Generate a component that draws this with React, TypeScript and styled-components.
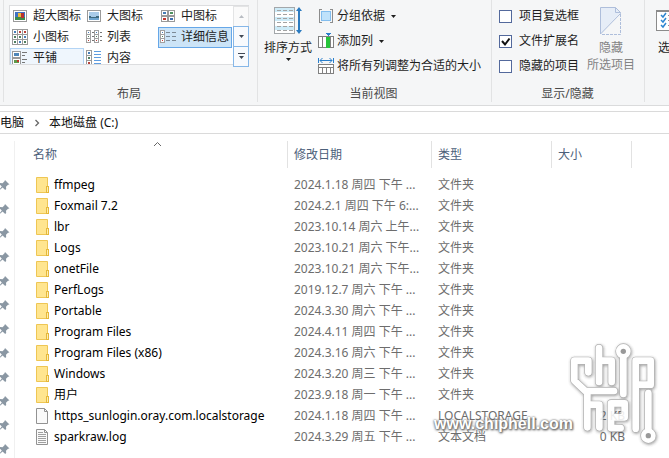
import React from "react";
import styled, { createGlobalStyle, css } from "styled-components";

const GlobalStyle = createGlobalStyle`
  * { box-sizing: border-box; }
  body {
    margin: 0;
    background: #fff;
    color: #1e1e1e;
    font-family: "Noto Sans", "Noto Sans CJK SC", sans-serif;
    font-size: 12px;
    line-height: 16px;
  }
  button {
    font: inherit;
    color: inherit;
    margin: 0;
    padding: 0;
    border: 0;
    background: none;
    white-space: nowrap;
  }
  svg { display: block; flex: none; }
`;

const Window = styled.div`
  position: relative;
  display: flex;
  flex-direction: column;
  height: 100vh;
  overflow: hidden;
`;

const Ribbon = styled.header`
  display: flex;
  flex: none;
  padding: 0 0 3px 3px;
  background: #f5f6f7;
  border-bottom: 1px solid #dadbdc;
  overflow: hidden;
`;

const Group = styled.section<{ $width: number; $pad?: number }>`
  display: flex;
  flex-direction: column;
  flex: none;
  width: ${(p) => p.$width}px;
  padding-left: ${(p) => p.$pad ?? 0}px;
  border-left: 1px solid #e2e3e4;
`;

const GroupBody = styled.div<{ $gap?: number }>`
  display: flex;
  align-items: flex-start;
  gap: ${(p) => p.$gap ?? 0}px;
  height: 86px;
  padding-top: 5px;
`;

const GroupTitle = styled.h2<{ $shift?: number }>`
  margin: 0;
  font-size: 12px;
  font-weight: 400;
  text-align: center;
  color: #4a4a4a;
  padding-right: ${(p) => p.$shift ?? 0}px;
`;

const Gallery = styled.div`
  display: flex;
  height: 60px;
  border: 1px solid #dcdddf;
  background: #fff;
`;

const GalleryGrid = styled.div`
  display: grid;
  grid-template-columns: repeat(3, 74px);
  grid-auto-rows: 21px;
  overflow: hidden;
`;

const GalleryItem = styled.button<{ $state?: "active" | "hover" }>`
  display: flex;
  align-items: center;
  gap: 5px;
  padding: 0 0 2px 1px;
  border: 1px solid transparent;
  ${(p) =>
    p.$state === "active" &&
    css`
      border-color: #66a7e8;
      background: #cce4f7;
    `}
  ${(p) =>
    p.$state === "hover" &&
    css`
      border-color: #b3d4f5;
      background: #eff6fd;
    `}
`;

const GalleryScroll = styled.div`
  display: grid;
  grid-template-rows: 20px 20px 20px;
  width: 16px;
  margin: 0 -1px -1px 1px;
`;

const ScrollButton = styled.button<{ $disabled?: boolean }>`
  display: grid;
  place-items: center;
  margin-bottom: -1px;
  border: 1px solid ${(p) => (p.$disabled ? "#e3e4e5" : "#86b7e8")};
  color: ${(p) => (p.$disabled ? "#b8bcc2" : "#404854")};
  background: ${(p) => (p.$disabled ? "#fafafa" : "#f8fafd")};
`;

const BigButton = styled.button`
  display: flex;
  flex-direction: column;
  align-items: center;
  padding-top: 2px;
`;

const BigLabel = styled.span<{ $muted?: boolean }>`
  display: block;
  margin-top: 4px;
  text-align: center;
  line-height: 17px;
  color: ${(p) => (p.$muted ? "#838383" : "inherit")};
`;

const Stack = styled.div`
  display: flex;
  flex-direction: column;
  gap: 5px;
  padding-top: 1px;
`;

const SmallButton = styled.button`
  display: flex;
  align-items: center;
  height: 20px;
  gap: 3px;
`;

const Arrow = styled.span`
  margin-left: 2px;
`;

const CheckLabel = styled.label`
  display: flex;
  align-items: center;
  height: 20px;
  gap: 7px;
  white-space: nowrap;
`;

const CheckBox = styled.span`
  position: relative;
  display: grid;
`;

const CheckInput = styled.input`
  appearance: none;
  width: 13px;
  height: 13px;
  margin: 0;
  border: 1px solid #53699c;
  background: #fff;
  & + svg {
    position: absolute;
    inset: 0;
    visibility: hidden;
    pointer-events: none;
  }
  &:checked + svg {
    visibility: visible;
  }
`;

const AddressBar = styled.nav`
  display: flex;
  flex: none;
  align-items: center;
  height: 23px;
  margin-top: 5px;
  border: solid #dadada;
  border-width: 1px 0;
  color: #111;
`;

const Crumb = styled.a`
  color: inherit;
  text-decoration: none;
`;

const CrumbArrow = styled.span`
  display: grid;
  place-items: center;
  width: 25px;
`;

const Body = styled.div`
  display: flex;
  flex: 1;
  min-height: 0;
`;

const PinRail = styled.aside`
  display: flex;
  flex-direction: column;
  flex: none;
  width: 15px;
  gap: 12px;
  padding-top: 38px;
  margin-top: 7px;
  border-right: 1px solid #f0f0f0;
  overflow: hidden;
`;

const FilePane = styled.main`
  flex: 1;
  min-width: 0;
  padding-top: 7px;
`;

const FileTable = styled.table`
  width: 100%;
  table-layout: fixed;
  border-collapse: separate;
  border-spacing: 0;
  white-space: nowrap;
  thead::after {
    content: "";
    display: block;
    height: 6px;
  }
`;

const Col = styled.col<{ $width?: number }>`
  width: ${(p) => (p.$width ? `${p.$width}px` : "auto")};
`;

const HeadCell = styled.th<{ $first?: boolean; $last?: boolean }>`
  position: relative;
  height: 27px;
  padding: 1px 0 0 ${(p) => (p.$first ? 18 : 6)}px;
  border-right: ${(p) => (p.$last ? "0" : "1px solid #e2e2e2")};
  font-weight: 400;
  text-align: left;
  color: #4c607a;
`;

const SortMark = styled.span`
  position: absolute;
  top: 0;
  left: 138px;
`;

const Cell = styled.td<{ $right?: boolean }>`
  height: 21px;
  padding: 0 7px 0 6px;
  color: #6d6d6d;
  text-align: ${(p) => (p.$right ? "right" : "left")};
`;

const NameCell = styled(Cell)`
  padding-left: 21px;
  color: #000;
`;

const FileName = styled.span`
  display: flex;
  align-items: center;
  gap: 5px;
`;

const Watermark = styled.div`
  position: absolute;
  right: 0;
  bottom: 5px;
  display: flex;
  align-items: flex-end;
  pointer-events: none;
`;

const WatermarkText = styled.span`
  margin: 0 -13px 19px 0;
  font: bold 16px/20px "Liberation Sans", Arial, sans-serif;
  color: #fff;
  text-shadow: 0 0 2px #666, 1px 1px 2px #666, 0 1px 3px #888;
`;

const Frame = ({ x, y, w, h }: { x: number; y: number; w: number; h: number }) => (
  <rect x={x + 0.5} y={y + 0.5} width={w - 1} height={h - 1} fill="#fff" stroke="#9a9a9a" />
);

const icons: Record<string, React.ReactNode> = {
  xl: (
    <>
      <Frame x={1} y={2} w={14} h={12} />
      <rect x="3" y="4" width="10" height="8" fill="#3f72c4" />
      <rect x="3" y="9" width="10" height="3" fill="#3d8a4a" />
      <rect x="6" y="5" width="3" height="4" fill="#e8b93a" />
      <rect x="9" y="5" width="3" height="5" fill="#b8322f" />
    </>
  ),
  large: (
    <>
      <Frame x={1} y={2} w={14} h={12} />
      <rect x="3" y="4" width="10" height="8" fill="#a9cbe8" />
      <path d="M3 8l4 1 6-1v4H3z" fill="#3e6a80" />
      <rect x="3" y="10" width="10" height="2" fill="#6fa5cf" />
    </>
  ),
  medium: (
    <>
      <Frame x={1} y={2} w={7} h={6} />
      <Frame x={8} y={2} w={7} h={6} />
      <Frame x={1} y={8} w={7} h={6} />
      <Frame x={8} y={8} w={7} h={6} />
      <path d="M3 4h3v2H3z" fill="#477eb8" />
      <path d="M10 4h3v2h-3z" fill="#4f9360" />
      <path d="M3 10h3v2H3z" fill="#c4372f" />
      <path d="M10 10h3v2h-3z" fill="#3d6eb1" />
    </>
  ),
  small: (
    <>
      {[0, 5, 10].map((y) =>
        [0, 5, 10].map((x) => (
          <g key={`${x}-${y}`}>
            <rect x={x + 0.5} y={y + 0.5} width="5" height="5" fill="#fff" stroke="#9a9a9a" />
            <rect
              x={x + 2}
              y={y + 2}
              width="2"
              height="2"
              fill={(x + y) % 3 === 0 ? "#477eb8" : x > y ? "#b9423b" : "#4f7f60"}
            />
          </g>
        ))
      )}
    </>
  ),
  list: (
    <>
      {[0, 8].map((x) =>
        [2, 6, 10].map((y, i) => (
          <g key={`${x}-${y}`}>
            <rect x={x + 0.5} y={y - 0.5} width="4" height="4" fill="#fff" stroke="#a0a0a0" />
            <rect x={x + 2} y={y + 1} width="1" height="1" fill={["#477eb8", "#4f7f60", "#b9423b"][i]} />
            <path d={`M${x + 6} ${y + 1.5}h2`} stroke="#777" />
          </g>
        ))
      )}
    </>
  ),
  details: (
    <>
      {[2, 6, 10].map((y, i) => (
        <g key={y}>
          <rect x="0.5" y={y - 0.5} width="4" height="4" fill="#fff" stroke="#a0a0a0" />
          <rect x="2" y={y + 1} width="1" height="1" fill={["#477eb8", "#4f7f60", "#d03a33"][i]} />
          <path d={`M6 ${y + 1.5}h4m2 0h4`} stroke="#7d8a96" />
        </g>
      ))}
    </>
  ),
  tiles: (
    <>
      <Frame x={0} y={1} w={9} h={7} />
      <Frame x={0} y={8} w={9} h={7} />
      <path d="M2 3h5v3H2z" fill="#4e86b9" />
      <path d="M2 10h5v3H2z" fill="#5d9a4c" />
      <path d="M5 10h2v2H5z" fill="#c4372f" />
      <path d="M10 2.5h5M10 5.5h3M10 9.5h5M10 12.5h3" stroke="#777" />
    </>
  ),
  content: (
    <>
      {[1, 6, 11].map((y, i) => (
        <g key={y}>
          <rect x="0.5" y={y - 0.5} width="5" height="5" fill="#fff" stroke="#9a9a9a" />
          <rect x="2" y={y + 1} width="2" height="2" fill={["#477eb8", "#4f7f60", "#b9423b"][i]} />
        </g>
      ))}
      <path d="M8 1.5h7M8 4.5h7M8 7.5h7M8 10.5h7M8 13.5h7" stroke="#5f9de0" />
    </>
  ),
  group: (
    <>
      <path d="M4 1.5H1.5v13H4M12 1.5h2.5v13H12" fill="none" stroke="#8c8c8c" />
      <rect x="3.5" y="3.5" width="9" height="9" fill="#bfe2fb" stroke="#82bdee" />
    </>
  ),
  addColumn: (
    <>
      <rect x="0.5" y="3.5" width="15" height="11" fill="#fff" stroke="#808080" />
      <path d="M4.5 3v12M12.5 3v12" stroke="#808080" />
      <rect x="8" y="4" width="4" height="11" fill="#26c43a" />
      <path d="M7 0h6l-3 3z" fill="#2a7fcc" />
    </>
  ),
  fitColumns: (
    <>
      <path d="M.5 0v5M15.5 0v5M2 2.5h12M4.500 0L2 2.5 4.500 5M11.500 0L14 2.5 11.500 5" fill="none" stroke="#2a7fcc" />
      <rect x="0.5" y="6.5" width="15" height="9" fill="#fff" stroke="#808080" />
      <path d="M0 9.5h16M4.5 10v6M8.5 10v6M12.5 10v6" stroke="#808080" />
    </>
  ),
};

const Icon = ({ name }: { name: string }) => (
  <svg width="16" height="16" viewBox="0 0 16 16" shapeRendering={name === "fitColumns" ? "auto" : "crispEdges"} aria-hidden="true">
    {icons[name]}
  </svg>
);

const Caret = ({ kind = "down" }: { kind?: "up" | "down" | "more" }) => (
  <svg width="7" height="7" viewBox="0 0 7 7" fill="currentColor" aria-hidden="true">
    {kind === "up" && <path d="M1 5h5L3.5 2z" />}
    {kind === "down" && <path d="M1 2h5L3.5 5z" />}
    {kind === "more" && <path d="M0 0h7v1H0zM1 3h5L3.5 6z" />}
  </svg>
);

const SortIcon = () => (
  <svg width="28" height="28" viewBox="0 0 28 28" aria-hidden="true">
    <rect x="0.5" y="0.5" width="20" height="26" fill="#fff" stroke="#a3a7aa" />
    {[1, 10, 19].map((y) => (
      <rect key={y} x="1" y={y} width="19" height="4" fill="#cdebf8" />
    ))}
    {[3.5, 7.5, 11.5, 15.5, 19.5, 23.5].map((y) => (
      <path key={y} d={`M3 ${y}h4m2 0h4m2 0h4`} stroke="#a3a3a3" />
    ))}
    <path d="M25 2v23" stroke="#2b7bc0" strokeWidth="2" />
    <path d="M22 4l3-4 3 4zM22 23l3 4 3-4z" fill="#2b7bc0" />
  </svg>
);

const HideIcon = () => (
  <svg width="22" height="28" viewBox="0 0 22 28" fill="none" aria-hidden="true">
    <path d="M.5 27V.5h15l5 5L.5 27z" fill="#e6edf7" />
    <path d="M.5 27V.5h15l5 5v1L.5 27M15.5.5v5h5" stroke="#aebedb" />
    <path d="M20.5 7v20.5H1" stroke="#aebedb" strokeDasharray="3 1" />
  </svg>
);

const OptionsIcon = () => (
  <svg width="28" height="28" viewBox="0 0 28 28" aria-hidden="true">
    <rect x="0.5" y="3.5" width="27" height="20" fill="#fff" stroke="#8b8b8b" />
    <path d="M1 4.5h26" stroke="#8b8b8b" />
    {[8, 13, 18].map((y) => (
      <g key={y} fill="none">
        <path d={`M5 ${y}l2 2 3-4`} stroke="#2d86d1" strokeWidth="1.5" />
        <path d={`M12 ${y + 0.5}h12`} stroke="#8b8b8b" />
      </g>
    ))}
  </svg>
);

const Pin = () => (
  <svg width="12" height="12" viewBox="0 0 12 12" aria-hidden="true">
    <path
      d="M5 1l4.500 4.500-1.500.3-2 2 .2 2.200-1 1L2.600 8.400-1 11.500l-.3-.3 3.100-3.700L-.8 5l1-1 2.300.2 2-2z"
      fill="#8a97a3"
    />
  </svg>
);

const FolderIcon = () => (
  <svg width="13" height="16" viewBox="0 0 13 16" aria-hidden="true">
    <path d="M.5.5h11v15H.5z" fill="#ffe58f" stroke="#eec654" />
    <rect x="10.5" y="9.5" width="2" height="6" fill="#ffeeb0" stroke="#e5b83a" />
  </svg>
);

const FileIcon = ({ lined }: { lined?: boolean }) => (
  <svg width="13" height="16" viewBox="0 0 13 16" fill="none" aria-hidden="true">
    <path d="M.5.5h8l3 3v12H.5z" fill="#fafafa" stroke="#929292" />
    <path d="M8.5.5v3h3" stroke="#929292" />
    {lined && <path d="M2 3.5h5M2 5.5h8M2 7.5h8M2 9.5h8M2 11.5h8M2 13.5h8" stroke="#a0a0a0" />}
  </svg>
);

const logoLines =
  "M85 103V68H43V128L76 159H162 M82 162V268 M82 200H118V268 M117 30V132 M117 68H155V132 M190 58V168 M227 272V68H272V140H238 M153 196H194V238H153 M153 196V270H182 M265 165V275";

const LogoMark = () => (
  <svg width="109" height="115" viewBox="0 0 327 345" fill="none" aria-hidden="true">
    <defs>
      <filter id="logoShadow" x="-10%" y="-10%" width="125%" height="125%">
        <feDropShadow dx="2" dy="3" stdDeviation="4" floodColor="#444" floodOpacity="0.6" />
      </filter>
    </defs>
    <g filter="url(#logoShadow)" strokeLinecap="round" strokeLinejoin="round" opacity="0.88">
      <g stroke="#a6a6a6" strokeWidth="24">
        <path d={logoLines} />
        <circle cx="190" cy="40" r="12" />
        <circle cx="265" cy="293" r="12" />
      </g>
      <g stroke="#fff" strokeWidth="20">
        <path d={logoLines} />
        <circle cx="190" cy="40" r="12" />
        <circle cx="265" cy="293" r="12" />
      </g>
      <circle cx="190" cy="40" r="8" fill="#8c8c8c" />
      <circle cx="265" cy="293" r="8" fill="#8c8c8c" />
    </g>
  </svg>
);

const views: { icon: string; label: string; state?: "active" | "hover" }[] = [
  { icon: "xl", label: "超大图标" },
  { icon: "large", label: "大图标" },
  { icon: "medium", label: "中图标" },
  { icon: "small", label: "小图标" },
  { icon: "list", label: "列表" },
  { icon: "details", label: "详细信息", state: "active" },
  { icon: "tiles", label: "平铺", state: "hover" },
  { icon: "content", label: "内容" },
];

const toggles = [
  { label: "项目复选框", on: false },
  { label: "文件扩展名", on: true },
  { label: "隐藏的项目", on: false },
];

type Entry = { name: string; date: string; type?: string; size?: string; kind?: "blank" | "text" };

const entries: Entry[] = [
  { name: "ffmpeg", date: "2024.1.18 周四 下午 ..." },
  { name: "Foxmail 7.2", date: "2024.2.1 周四 下午 6:..." },
  { name: "lbr", date: "2023.10.14 周六 上午..." },
  { name: "Logs", date: "2023.10.21 周六 下午..." },
  { name: "onetFile", date: "2023.10.21 周六 下午..." },
  { name: "PerfLogs", date: "2019.12.7 周六 下午 ..." },
  { name: "Portable", date: "2024.3.30 周六 下午 ..." },
  { name: "Program Files", date: "2024.4.11 周四 下午 ..." },
  { name: "Program Files (x86)", date: "2024.3.16 周六 下午 ..." },
  { name: "Windows", date: "2024.3.20 周三 下午 ..." },
  { name: "用户", date: "2023.9.18 周一 下午 ..." },
  {
    name: "https_sunlogin.oray.com.localstorage",
    date: "2024.1.18 周四 下午 ...",
    type: "LOCALSTORAGE...",
    size: "2 KB",
    kind: "blank",
  },
  { name: "sparkraw.log", date: "2024.3.29 周五 下午 ...", type: "文本文档", size: "0 KB", kind: "text" },
];

export default function App() {
  return (
    <>
      <GlobalStyle />
      <Window>
        <Ribbon>
          <Group $width={254} $pad={5}>
            <GroupBody>
              <Gallery>
                <GalleryGrid>
                  {views.map((v) => (
                    <GalleryItem key={v.icon} type="button" $state={v.state}>
                      <Icon name={v.icon} />
                      {v.label}
                    </GalleryItem>
                  ))}
                </GalleryGrid>
                <GalleryScroll>
                  <ScrollButton type="button" aria-label="向上滚动" $disabled>
                    <Caret kind="up" />
                  </ScrollButton>
                  <ScrollButton type="button" aria-label="向下滚动">
                    <Caret />
                  </ScrollButton>
                  <ScrollButton type="button" aria-label="更多">
                    <Caret kind="more" />
                  </ScrollButton>
                </GalleryScroll>
              </Gallery>
            </GroupBody>
            <GroupTitle $shift={8}>布局</GroupTitle>
          </Group>

          <Group $width={234} $pad={6}>
            <GroupBody $gap={6}>
              <BigButton type="button">
                <SortIcon />
                <BigLabel>排序方式</BigLabel>
                <Caret />
              </BigButton>
              <Stack>
                <SmallButton type="button">
                  <Icon name="group" />
                  分组依据
                  <Arrow>
                    <Caret />
                  </Arrow>
                </SmallButton>
                <SmallButton type="button">
                  <Icon name="addColumn" />
                  添加列
                  <Arrow>
                    <Caret />
                  </Arrow>
                </SmallButton>
                <SmallButton type="button">
                  <Icon name="fitColumns" />
                  将所有列调整为合适的大小
                </SmallButton>
              </Stack>
            </GroupBody>
            <GroupTitle $shift={8}>当前视图</GroupTitle>
          </Group>

          <Group $width={153} $pad={7}>
            <GroupBody $gap={8}>
              <Stack>
                {toggles.map((t) => (
                  <CheckLabel key={t.label}>
                    <CheckBox>
                      <CheckInput type="checkbox" defaultChecked={t.on} />
                      <svg width="13" height="13" viewBox="0 0 13 13" fill="none" aria-hidden="true">
                        <path d="M3 6l3 3.5L10.5 3.5" stroke="#111" strokeWidth="2" />
                      </svg>
                    </CheckBox>
                    {t.label}
                  </CheckLabel>
                ))}
              </Stack>
              <BigButton type="button">
                <HideIcon />
                <BigLabel $muted>
                  隐藏
                  <br />
                  所选项目
                </BigLabel>
              </BigButton>
            </GroupBody>
            <GroupTitle $shift={8}>显示/隐藏</GroupTitle>
          </Group>

          <Group $width={54} $pad={11}>
            <GroupBody>
              <BigButton type="button">
                <OptionsIcon />
                <BigLabel>选项</BigLabel>
              </BigButton>
            </GroupBody>
          </Group>
        </Ribbon>

        <AddressBar>
          <Crumb href="#computer">电脑</Crumb>
          <CrumbArrow>
            <svg width="6" height="8" viewBox="0 0 6 8" fill="none" aria-hidden="true">
              <path d="M1.5 1l3 3-3 3" stroke="#666" strokeWidth="1.3" />
            </svg>
          </CrumbArrow>
          <Crumb href="#c">本地磁盘 (C:)</Crumb>
        </AddressBar>

        <Body>
          <PinRail>
            {Array.from({ length: 12 }, (_, i) => (
              <Pin key={i} />
            ))}
          </PinRail>
          <FilePane>
            <FileTable>
              <colgroup>
                <Col $width={273} />
                <Col $width={144} />
                <Col $width={120} />
                <Col $width={80} />
                <Col />
              </colgroup>
              <thead>
                <tr>
                  <HeadCell $first>
                    名称
                    <SortMark>
                      <svg width="9" height="6" viewBox="0 0 9 6" fill="none" aria-hidden="true">
                        <path d="M1 5l3.5-3.5L8 5" stroke="#666" />
                      </svg>
                    </SortMark>
                  </HeadCell>
                  <HeadCell>修改日期</HeadCell>
                  <HeadCell>类型</HeadCell>
                  <HeadCell>大小</HeadCell>
                  <HeadCell $last />
                </tr>
              </thead>
              <tbody>
                {entries.map((e) => (
                  <tr key={e.name}>
                    <NameCell>
                      <FileName>
                        {e.kind ? <FileIcon lined={e.kind === "text"} /> : <FolderIcon />}
                        {e.name}
                      </FileName>
                    </NameCell>
                    <Cell>{e.date}</Cell>
                    <Cell>{e.type ?? "文件夹"}</Cell>
                    <Cell $right>{e.size}</Cell>
                    <Cell />
                  </tr>
                ))}
              </tbody>
            </FileTable>
          </FilePane>
        </Body>

        <Watermark>
          <WatermarkText>www.chiphell.com</WatermarkText>
          <LogoMark />
        </Watermark>
      </Window>
    </>
  );
}
